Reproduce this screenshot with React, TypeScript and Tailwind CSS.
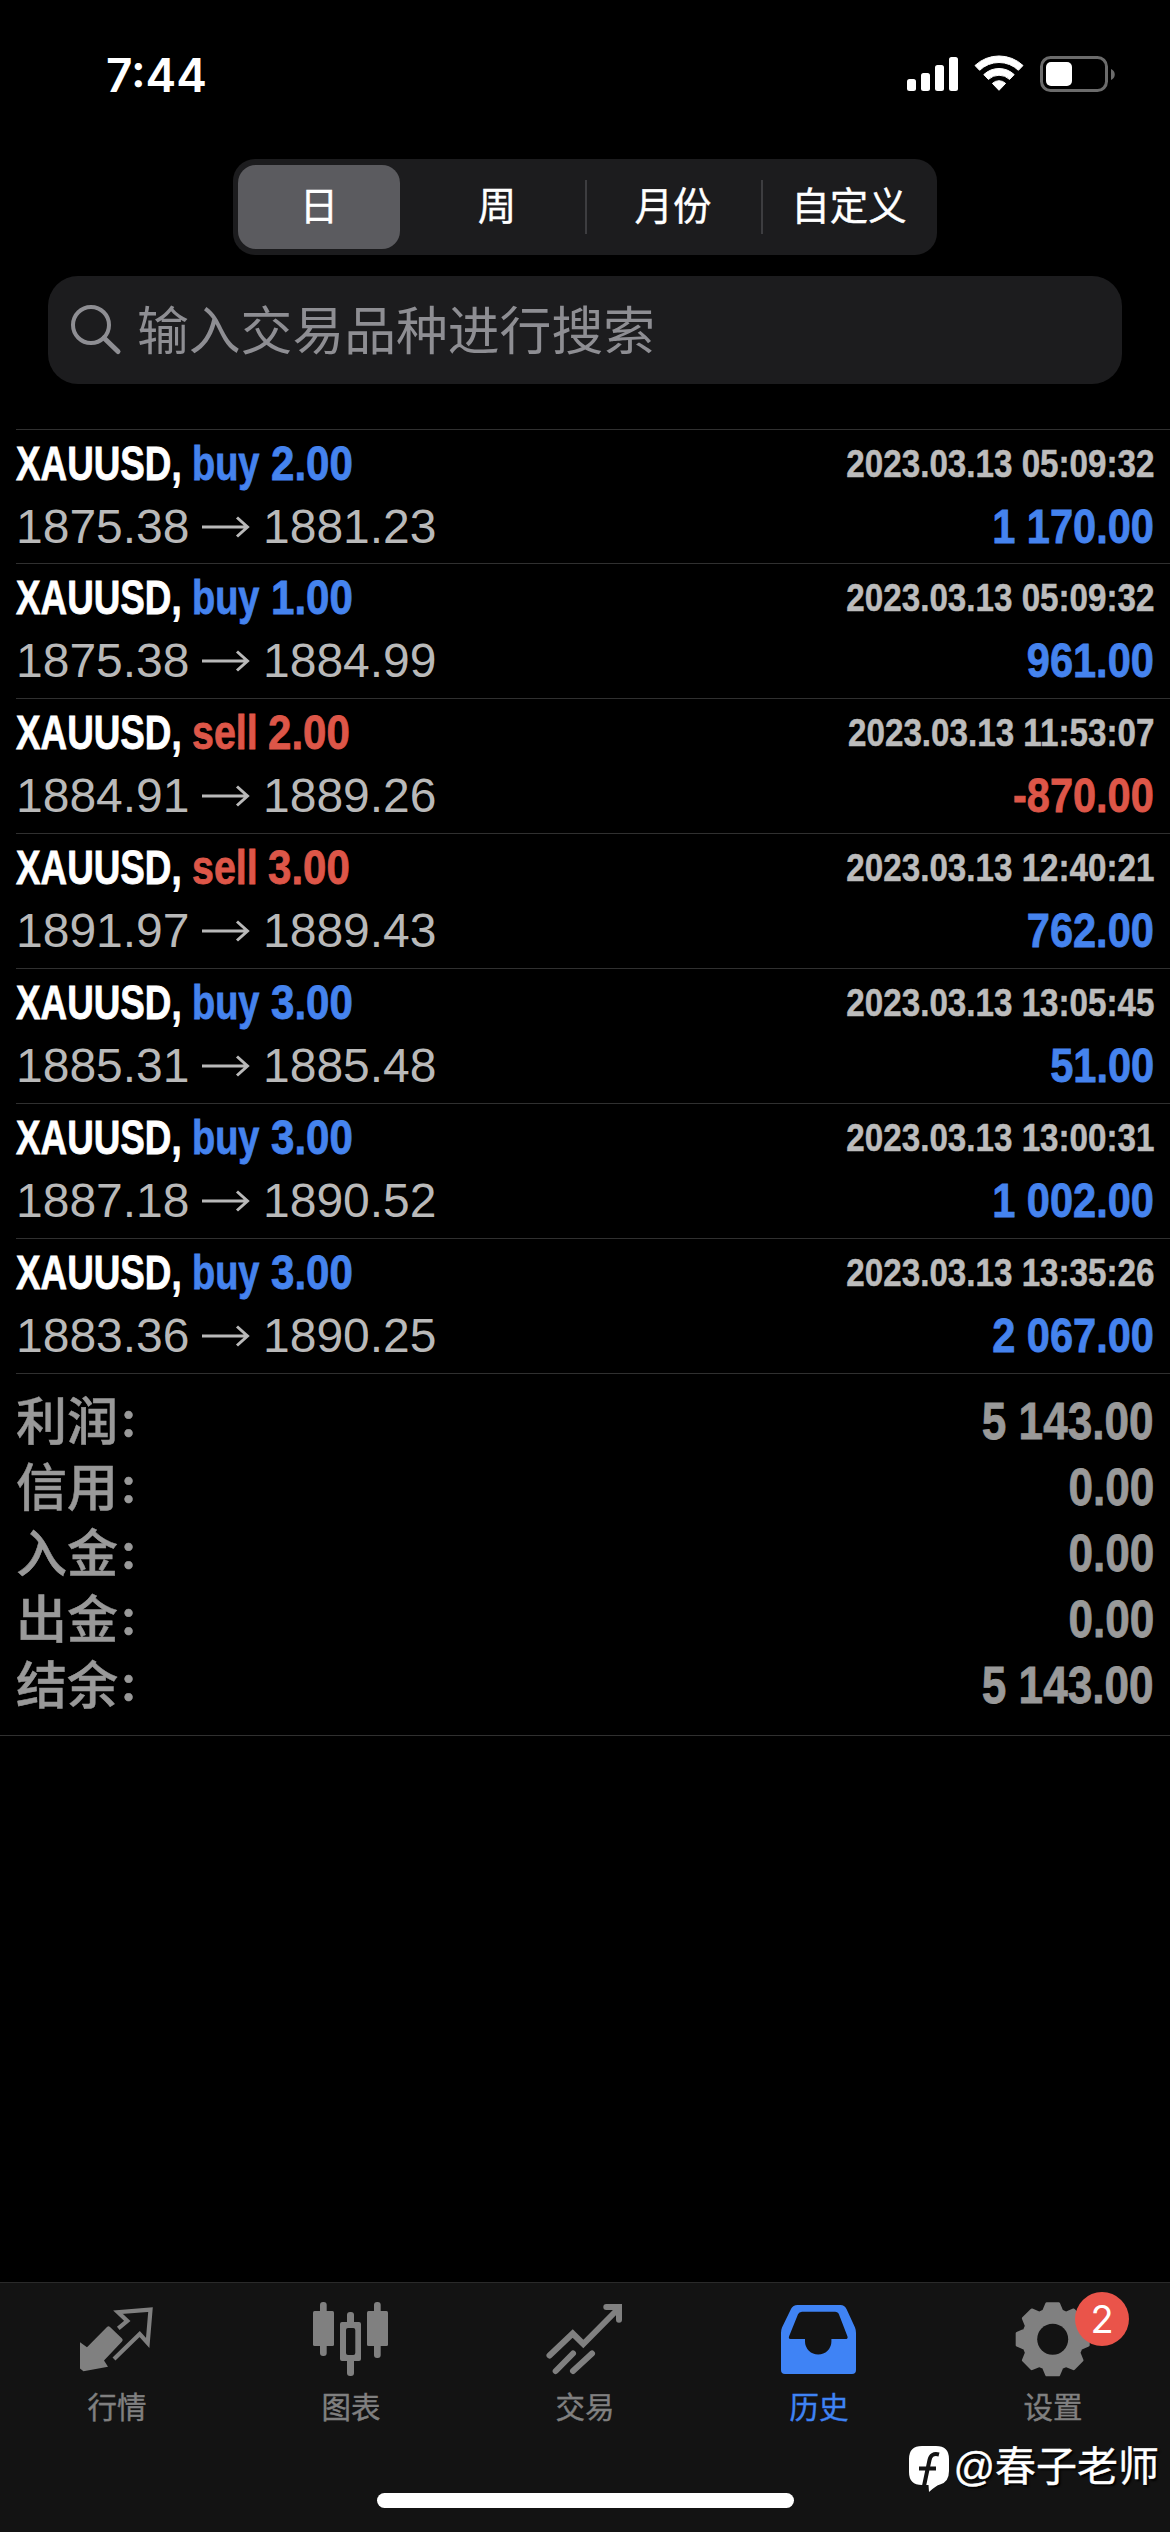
import { clsx } from "clsx";
import type { ReactNode } from "react";

type Deal = {
  side: "buy" | "sell";
  volume: string;
  open: string;
  close: string;
  time: string;
  profit: string;
};

const PERIODS = ["日", "周", "月份", "自定义"];

const DEALS: Deal[] = [
  { side: "buy", volume: "2.00", open: "1875.38", close: "1881.23", time: "2023.03.13 05:09:32", profit: "1 170.00" },
  { side: "buy", volume: "1.00", open: "1875.38", close: "1884.99", time: "2023.03.13 05:09:32", profit: "961.00" },
  { side: "sell", volume: "2.00", open: "1884.91", close: "1889.26", time: "2023.03.13 11:53:07", profit: "-870.00" },
  { side: "sell", volume: "3.00", open: "1891.97", close: "1889.43", time: "2023.03.13 12:40:21", profit: "762.00" },
  { side: "buy", volume: "3.00", open: "1885.31", close: "1885.48", time: "2023.03.13 13:05:45", profit: "51.00" },
  { side: "buy", volume: "3.00", open: "1887.18", close: "1890.52", time: "2023.03.13 13:00:31", profit: "1 002.00" },
  { side: "buy", volume: "3.00", open: "1883.36", close: "1890.25", time: "2023.03.13 13:35:26", profit: "2 067.00" },
];

const SUMMARY = [
  { label: "利润", value: "5 143.00" },
  { label: "信用", value: "0.00" },
  { label: "入金", value: "0.00" },
  { label: "出金", value: "0.00" },
  { label: "结余", value: "5 143.00" },
];

function StatusBar() {
  return (
    <header className="flex h-[159px] items-start justify-between pl-[106px] pr-[54px]">
      <div className="mt-[46px] font-['Inter'] text-[46px] font-semibold leading-[58px]">7:44</div>
      <svg className="mt-[54px]" width="210" height="40" viewBox="0 0 210 40" fill="white">
        <rect x="1" y="25" width="9" height="12" rx="2.5" />
        <rect x="15" y="19" width="9" height="18" rx="2.5" />
        <rect x="29" y="11" width="9" height="26" rx="2.5" />
        <rect x="43" y="3" width="9" height="34" rx="2.5" />
        <path d="M69 11.5a35 35 0 0 1 48 0l-4.6 4.8a28 28 0 0 0-38.8 0z" stroke="white" strokeLinejoin="round" />
        <path d="M77.8 20.6a22 22 0 0 1 30.4 0l-4.6 4.8a15.5 15.5 0 0 0-21.2 0z" stroke="white" strokeLinejoin="round" />
        <path d="M86.4 29.4a9.5 9.5 0 0 1 13.2 0l-6.6 6.9z" stroke="white" strokeLinejoin="round" />
        <rect x="135.5" y="3.500" width="65" height="33" rx="9" fill="none" stroke="#6b6b6b" strokeWidth="3" />
        <rect x="140" y="8" width="26" height="24" rx="5" />
        <path d="M205 15c5 2 5 9 0 11z" fill="#6b6b6b" />
      </svg>
    </header>
  );
}

function PeriodTabs() {
  return (
    <div className="mx-auto grid h-24 w-[704px] grid-cols-4 rounded-[22px] bg-[#1c1c1e]">
      {PERIODS.map((period, i) => (
        <div key={period} className="relative flex items-center justify-center">
          {i === 0 && <div className="absolute inset-y-1.5 left-[5px] right-[9px] rounded-[18px] bg-[#5b5b5f]" />}
          {i > 1 && <div className="absolute left-0 h-[54px] w-0.5 bg-[#3d3d40]" />}
          <span
            className={clsx(
              "relative pt-px text-[38.5px] leading-none [-webkit-text-stroke:0.4px]",
              i === 0 && "-left-0.5",
            )}
          >
            {period}
          </span>
        </div>
      ))}
    </div>
  );
}

function SearchField() {
  return (
    <div className="mx-12 mt-[21px] flex h-[108px] items-center rounded-[30px] bg-[#1c1c1e] pl-[22px] text-[#8e8e93]">
      <svg width="52" height="52" viewBox="0 0 52 52" fill="none" stroke="currentColor" strokeWidth="4" strokeLinecap="round">
        <circle cx="21" cy="21" r="18" />
        <path d="M34 34l14 13.500" strokeWidth="5" />
      </svg>
      <span className="ml-[15px] pt-1.5 text-[51.8px] leading-none">输入交易品种进行搜索</span>
    </div>
  );
}

function DealRow({ deal }: { deal: Deal }) {
  const sideColor = deal.side === "buy" ? "text-[#4583ee]" : "text-[#dd5648]";
  return (
    <div className="ml-4 flex h-[134.86px] justify-between border-t border-[#303030] pr-4 pt-[7px]">
      <div>
        <div className="flex h-[54px] text-[48px] font-bold leading-[54px] [-webkit-text-stroke:0.8px]">
          <span className="w-44 origin-left scale-x-[0.767]">XAUUSD,</span>
          <span
            className={clsx(
              "origin-left",
              sideColor,
              deal.side === "buy" ? "w-[79px] scale-x-[0.79]" : "w-[76px] scale-x-[0.82]",
            )}
          >
            {deal.side}
          </span>
          <span className={clsx("w-24 origin-left scale-x-[0.876]", sideColor)}>{deal.volume}</span>
        </div>
        <div className="mt-[9px] flex h-[54px] items-center text-[48px] leading-[54px] text-[#b9b9b9]">
          <span className="w-[186px]">{deal.open}</span>
          <svg width="48" height="24" viewBox="0 0 48 24" fill="none" stroke="currentColor" strokeWidth="3">
            <path d="M0 12H45M35 2.500L45.500 12L35 21.500" />
          </svg>
          <span className="ml-[13px]">{deal.close}</span>
        </div>
      </div>
      <div className="flex flex-col items-end font-bold">
        <span className="h-[54px] origin-right scale-x-[0.862] text-[38.5px] leading-[54px] text-[#bcbcbc] [-webkit-text-stroke:0.5px]">
          {deal.time}
        </span>
        <span
          className={clsx(
            "mt-[9px] h-[54px] origin-right scale-x-[0.865] text-[48px] leading-[54px] [-webkit-text-stroke:0.8px]",
            deal.profit.startsWith("-") ? "text-[#dd5648]" : "text-[#4583ee]",
          )}
        >
          {deal.profit}
        </span>
      </div>
    </div>
  );
}

function Summary() {
  return (
    <section className="border-b border-[#303030] text-[#999]">
      <div className="ml-4 border-t border-[#303030] pb-4 pr-4 pt-[15px]">
        {SUMMARY.map((row) => (
          <div key={row.label} className="flex h-[66px] items-center justify-between text-[51px] leading-[66px]">
            <span className="font-medium [-webkit-text-stroke:0.5px]">
              {row.label}
              <span className="relative -top-[3px] ml-1 font-['Lato'] font-bold">:</span>
            </span>
            <span className="origin-right scale-x-[0.865] font-bold [-webkit-text-stroke:0.8px]">{row.value}</span>
          </div>
        ))}
      </div>
    </section>
  );
}

// eight teeth, 45 degrees apart
const GEAR_POINTS = Array.from({ length: 8 }, (_, i) =>
  [
    [29.5, -18],
    [36, -9.5],
    [36, 9.5],
    [29.5, 18],
  ].map(([r, deg]) => {
    const a = ((i * 45 + deg) * Math.PI) / 180;
    return `${(49.7 + r * Math.cos(a)).toFixed(2)},${(43.3 + r * Math.sin(a)).toFixed(2)}`;
  }),
)
  .flat()
  .join(" ");

const TABS: { label: string; active?: boolean; badge?: string; icon: ReactNode }[] = [
  {
    label: "行情",
    icon: (
      <>
        <path d="M13 46.3l7 5L40 31q1.500-1.500 3 0L55 42.500q1.500 1.500 0 3L37 64.500l4 6.200-24.500 4.500L13 72.500z" fill="currentColor" />
        <path d="M51.300 32.300L60.300 25l-9.300-8.800 32.500-2.600L80.700 47l-8-9L47 63" fill="none" stroke="currentColor" strokeWidth="4.200" />
      </>
    ),
  },
  {
    label: "图表",
    icon: (
      <g fill="currentColor">
        <rect x="19" y="6" width="6.700" height="54" rx="3" />
        <rect x="12" y="15" width="21" height="35" rx="1.500" />
        <rect x="46" y="16" width="7" height="14" rx="3" />
        <rect x="46" y="61" width="7" height="19" rx="3" />
        <path d="M41 26h17q2 0 2 2v35q0 2-2 2H41q-2 0-2-2V28q0-2 2-2zM47 32q-2 0-2 2v23q0 2 2 2h5.300q2 0 2-2V34q0-2-2-2z" fillRule="evenodd" />
        <rect x="73" y="6" width="6.700" height="56" rx="3" />
        <rect x="66" y="15" width="21" height="35" rx="1.500" />
      </g>
    ),
  },
  {
    label: "交易",
    icon: (
      <g fill="none" stroke="currentColor" strokeWidth="6" strokeLinecap="round">
        <path d="M14.500 59.500L37.700 37.500l10.600 10.500L83 13" />
        <path d="M71.300 11H84v12.800" />
        <path d="M20.700 75L38 57.500M38 75l19-17.500" />
      </g>
    ),
  },
  {
    label: "历史",
    active: true,
    icon: (
      <path
        d="M12 37Q12 34 13 31.500L22 13Q24 9 28.500 9h43Q75.500 9 77.500 13L86 31.500q1 2.500 1 5.500v37q0 4-4 4H16q-4 0-4-4zM33 15.700q-3 0-4 2.500L20 40.500Q19.300 43 21.500 43H36v2.500a13.200 13 0 0 0 26.400 0V43h14q3 0 2-2.800L70 18.500q-1-2.800-4-2.800z"
        fill="currentColor"
        fillRule="evenodd"
      />
    ),
  },
  {
    label: "设置",
    badge: "2",
    icon: (
      <>
        <polygon points={GEAR_POINTS} fill="currentColor" stroke="currentColor" strokeWidth="3" strokeLinejoin="round" />
        <circle cx="49.700" cy="43.300" r="15.500" fill="#131313" />
      </>
    ),
  },
];

function TabBar() {
  return (
    <nav className="mt-auto flex h-[250px] flex-col border-t border-[#2a2a2a] bg-[#131313]">
      <div className="grid grid-cols-5">
        {TABS.map((tab) => (
          <div
            key={tab.label}
            className={clsx("relative flex flex-col items-center pt-[13px]", tab.active ? "text-[#3f83f5]" : "text-[#808080]")}
          >
            <svg width="100" height="84" viewBox="0 0 100 84">
              {tab.icon}
            </svg>
            <span className="mt-2 text-[29.5px] leading-[40px] [-webkit-text-stroke:0.4px]">{tab.label}</span>
            {tab.badge && (
              <span className="absolute left-[139px] top-[9px] flex size-[54px] items-center justify-center rounded-full bg-[#ea544a] font-['Inter'] text-[38px] text-white">
                {tab.badge}
              </span>
            )}
          </div>
        ))}
      </div>
      <div className="mx-auto mb-6 mt-auto h-[15px] w-[417px] rounded-full bg-white" />
    </nav>
  );
}

function Watermark() {
  return (
    <div className="absolute bottom-[40px] right-[11px] flex h-[50px] items-center">
      <svg className="mr-px mt-1" width="44" height="48" viewBox="0 0 44 48">
        <path d="M14 1h14q13 0 13 13v12q0 11-9 13.500-4 1-11 7.500l-.5-7H14Q1 40 1 27V14Q1 1 14 1z" fill="white" />
        <path d="M31 9.500q-8-2-9.500 5.500l-5.500 26M11 23.500h17" fill="none" stroke="#131313" strokeWidth="4" />
      </svg>
      <span className="text-[41px] leading-[50px] [-webkit-text-stroke:0.4px] [text-shadow:2px_2px_2px_#000]">
        @春子老师
      </span>
    </div>
  );
}

export default function App() {
  return (
    <div className="relative flex h-[2532px] w-[1170px] flex-col overflow-hidden bg-black font-['Liberation_Sans','Noto_Sans_CJK_SC',sans-serif] text-white">
      <StatusBar />
      <PeriodTabs />
      <SearchField />
      <main className="mt-[44.6px]">
        {DEALS.map((deal, i) => (
          <DealRow key={i} deal={deal} />
        ))}
        <Summary />
      </main>
      <TabBar />
      <Watermark />
    </div>
  );
}
